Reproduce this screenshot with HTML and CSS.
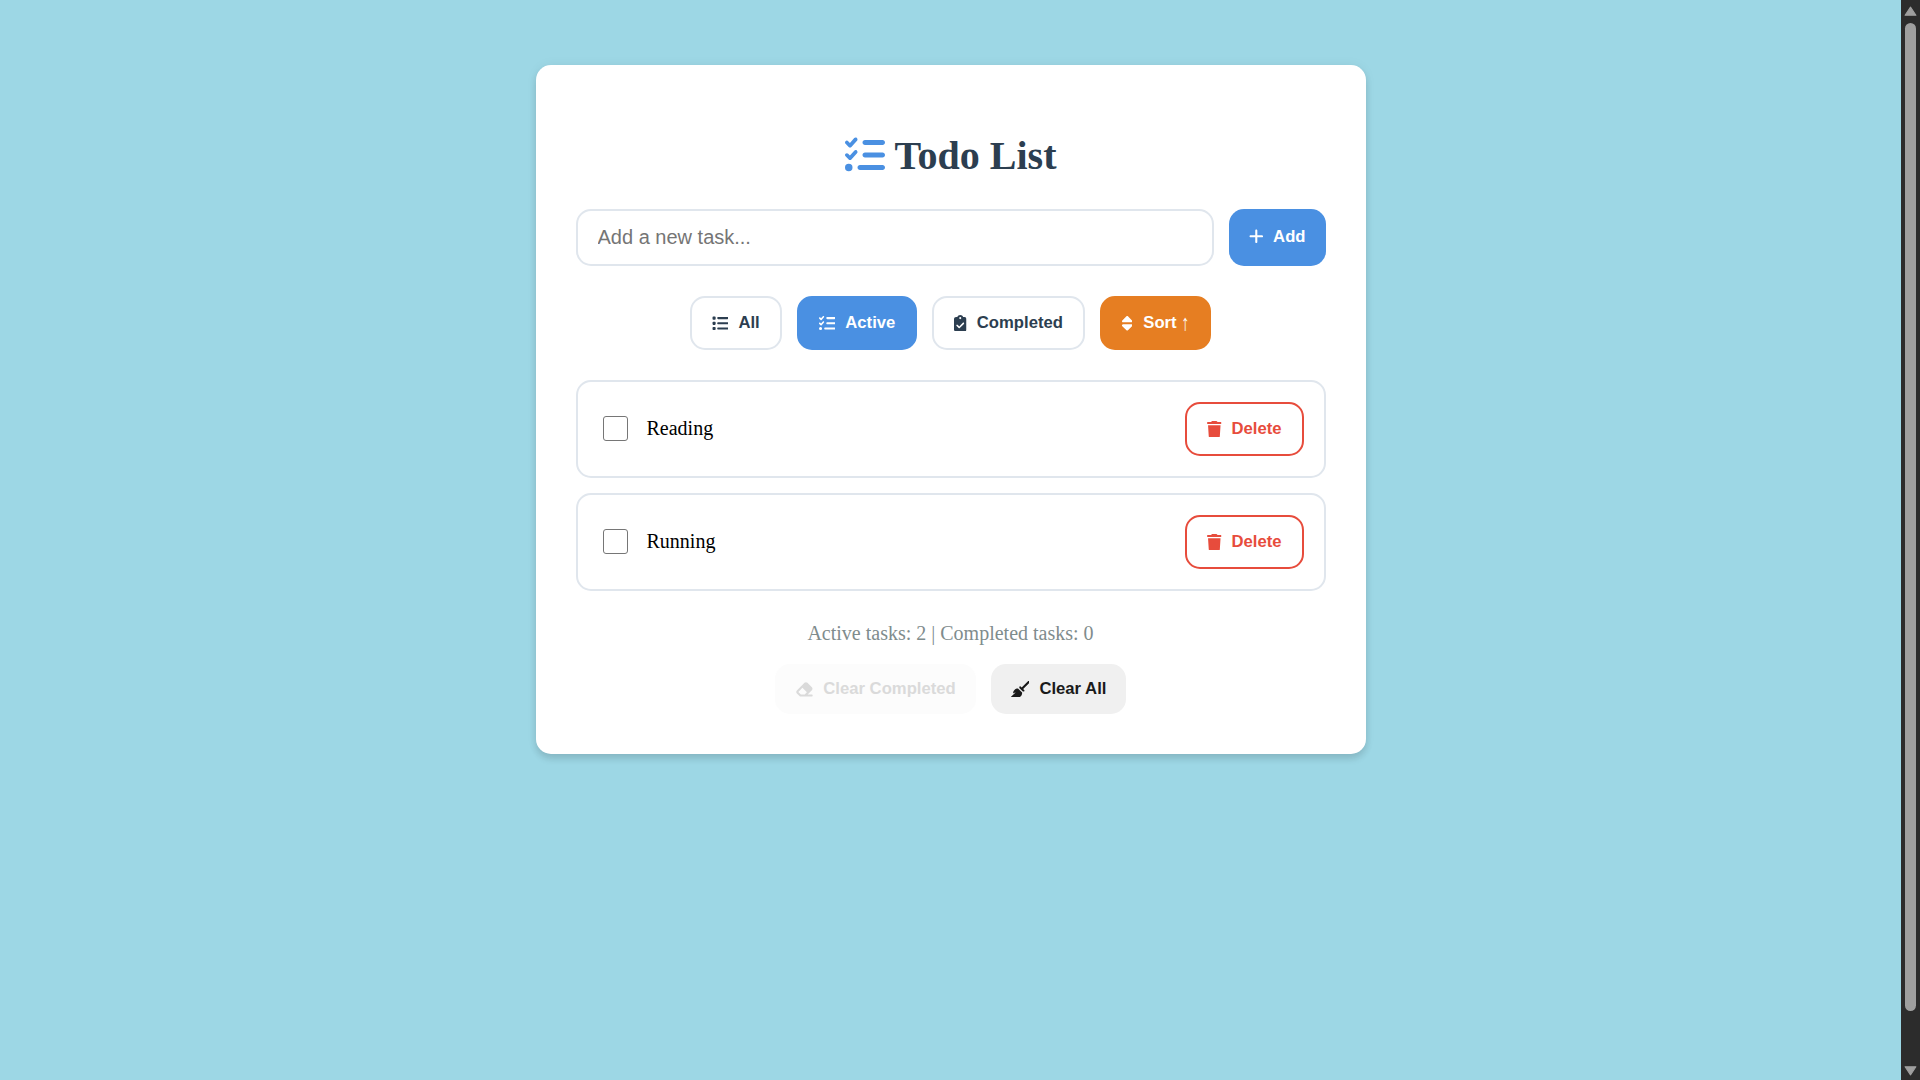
FILE: index.html
```html
<!DOCTYPE html>
<html lang="en">
<head>
<meta charset="utf-8">
<title>Todo List</title>
<link rel="stylesheet" href="styles.css">
</head>
<body>
<svg class="defs" aria-hidden="true">
  <symbol id="list-check" viewBox="0 0 512 512"><path d="M152.100 38.200c9.900 8.900 10.700 24 1.800 33.900l-72 80c-4.400 4.900-10.600 7.800-17.200 7.900s-12.900-2.400-17.600-7L7 113C-2.300 103.600-2.300 88.400 7 79s24.600-9.400 33.900 0l22.100 22.100 55.100-61.200c8.900-9.900 24-10.700 33.900-1.800zm0 160c9.900 8.900 10.700 24 1.800 33.900l-72 80c-4.400 4.900-10.600 7.800-17.200 7.900s-12.900-2.400-17.600-7L7 273c-9.400-9.400-9.400-24.600 0-33.900s24.600-9.400 33.900 0l22.100 22.100 55.100-61.200c8.900-9.900 24-10.700 33.900-1.800zM224 96c0-17.700 14.300-32 32-32l224 0c17.700 0 32 14.300 32 32s-14.300 32-32 32l-224 0c-17.700 0-32-14.300-32-32zm0 160c0-17.700 14.300-32 32-32l224 0c17.700 0 32 14.300 32 32s-14.300 32-32 32l-224 0c-17.700 0-32-14.300-32-32zM160 416c0-17.700 14.300-32 32-32l288 0c17.700 0 32 14.300 32 32s-14.300 32-32 32l-288 0c-17.700 0-32-14.300-32-32zM48 368a48 48 0 1 1 0 96 48 48 0 1 1 0-96z"/></symbol>
  <symbol id="list" viewBox="0 0 512 512"><path d="M40 48C26.700 48 16 58.700 16 72l0 48c0 13.300 10.700 24 24 24l48 0c13.300 0 24-10.700 24-24l0-48c0-13.300-10.700-24-24-24L40 48zM192 64c-17.700 0-32 14.300-32 32s14.300 32 32 32l288 0c17.700 0 32-14.300 32-32s-14.300-32-32-32L192 64zm0 160c-17.700 0-32 14.300-32 32s14.300 32 32 32l288 0c17.700 0 32-14.300 32-32s-14.300-32-32-32l-288 0zm0 160c-17.700 0-32 14.300-32 32s14.300 32 32 32l288 0c17.700 0 32-14.300 32-32s-14.300-32-32-32l-288 0zM16 232l0 48c0 13.300 10.700 24 24 24l48 0c13.300 0 24-10.700 24-24l0-48c0-13.300-10.700-24-24-24l-48 0c-13.300 0-24 10.700-24 24zM40 368c-13.300 0-24 10.700-24 24l0 48c0 13.300 10.700 24 24 24l48 0c13.300 0 24-10.700 24-24l0-48c0-13.300-10.700-24-24-24l-48 0z"/></symbol>
  <symbol id="plus" viewBox="0 0 448 512"><path d="M256 80c0-17.700-14.300-32-32-32s-32 14.300-32 32l0 144L48 224c-17.700 0-32 14.300-32 32s14.300 32 32 32l144 0 0 144c0 17.700 14.300 32 32 32s32-14.300 32-32l0-144 144 0c17.700 0 32-14.300 32-32s-14.300-32-32-32l-144 0 0-144z"/></symbol>
  <symbol id="clipboard" viewBox="0 0 384 512"><path d="M192 0c-41.800 0-77.400 26.700-90.500 64L64 64C28.700 64 0 92.700 0 128L0 448c0 35.300 28.700 64 64 64l256 0c35.300 0 64-28.700 64-64l0-320c0-35.300-28.700-64-64-64l-37.500 0C269.400 26.700 233.800 0 192 0zm0 64a32 32 0 1 1 0 64 32 32 0 1 1 0-64zM305 273L177 401c-9.400 9.400-24.600 9.400-33.900 0L79 337c-9.400-9.400-9.400-24.600 0-33.900s24.600-9.400 33.900 0l47 47L271 239c9.400-9.400 24.600-9.400 33.900 0s9.400 24.600 0 33.900z"/></symbol>
  <symbol id="sort" viewBox="0 0 320 512"><path d="M137.400 41.400c12.500-12.500 32.800-12.500 45.300 0l128 128c9.200 9.200 11.900 22.900 6.900 34.900s-16.600 19.800-29.600 19.800L32 224c-12.900 0-24.600-7.800-29.600-19.800s-2.200-25.700 6.900-34.900l128-128zm0 429.300l-128-128c-9.200-9.200-11.900-22.900-6.900-34.900s16.600-19.800 29.600-19.800l256 0c12.900 0 24.600 7.800 29.600 19.800s2.200 25.700-6.900 34.900l-128 128c-12.500 12.500-32.800 12.500-45.300 0z"/></symbol>
  <symbol id="trash" viewBox="0 0 448 512"><path d="M135.200 17.700L128 32 32 32C14.300 32 0 46.300 0 64S14.300 96 32 96l384 0c17.700 0 32-14.300 32-32s-14.300-32-32-32l-96 0-7.200-14.300C307.400 6.800 296.300 0 284.200 0L163.800 0c-12.100 0-23.200 6.800-28.600 17.700zM416 128L32 128 53.200 467c1.600 25.300 22.600 45 47.900 45l245.800 0c25.300 0 46.300-19.700 47.900-45L416 128z"/></symbol>
  <symbol id="eraser" viewBox="0 0 576 512"><path d="M290.700 57.400L57.400 290.700c-25 25-25 65.500 0 90.500l80 80c12 12 28.300 18.700 45.300 18.700L288 480l9.400 0L512 480c17.700 0 32-14.300 32-32s-14.300-32-32-32l-124.100 0L518.600 285.300c25-25 25-65.500 0-90.500L381.300 57.400c-25-25-65.500-25-90.500 0zM297.400 416l-9.400 0-105.400 0-80-80L227.300 211.300 364.700 348.700 297.400 416z"/></symbol>
  <symbol id="broom" viewBox="0 0 576 512"><path d="M566.600 54.600c12.500-12.500 12.500-32.800 0-45.300s-32.800-12.500-45.300 0l-192 192-34.700-34.700c-4.200-4.200-10-6.600-16-6.600c-12.500 0-22.600 10.100-22.600 22.600l0 29.100L364.300 320l29.100 0c12.500 0 22.600-10.100 22.600-22.600c0-6-2.400-11.800-6.600-16l-34.700-34.700 192-192zM341.100 353.400L222.600 234.900c-42.700-3.700-85.200 11.700-115.800 42.300l-8 8C76.500 307.500 64 337.700 64 369.200c0 6.800 7.100 11.200 13.200 8.200l51.100-25.500c5-2.500 9.500 4.100 5.400 7.900L7.300 473.400C2.700 477.600 0 483.600 0 489.900C0 502.100 9.900 512 22.100 512l173.300 0c38.800 0 75.900-15.400 103.400-42.800c30.600-30.600 45.900-73.100 42.300-115.800z"/></symbol>
</svg>
<div class="window">
  <main class="page">
    <section class="card">
      <h1 class="title"><svg class="icon title-icon"><use href="#list-check"/></svg>Todo List</h1>
      <div class="entry">
        <input class="entry-input" type="text" placeholder="Add a new task...">
        <button class="btn primary"><svg class="icon w14"><use href="#plus"/></svg>Add</button>
      </div>
      <div class="filters">
        <button class="btn outline"><svg class="icon"><use href="#list"/></svg>All</button>
        <button class="btn outline active"><svg class="icon"><use href="#list-check"/></svg>Active</button>
        <button class="btn outline"><svg class="icon w12"><use href="#clipboard"/></svg>Completed</button>
        <button class="btn outline sort"><svg class="icon w10"><use href="#sort"/></svg><span>Sort <span class="direction">↑</span></span></button>
      </div>
      <ul class="tasks">
        <li class="task"><input class="check" type="checkbox"><span class="label">Reading</span><button class="btn outline danger"><svg class="icon w14"><use href="#trash"/></svg>Delete</button></li>
        <li class="task"><input class="check" type="checkbox"><span class="label">Running</span><button class="btn outline danger"><svg class="icon w14"><use href="#trash"/></svg>Delete</button></li>
      </ul>
      <p class="stats">Active tasks: 2 | Completed tasks: 0</p>
      <div class="clear">
        <button class="btn plain faded"><svg class="icon w18"><use href="#eraser"/></svg>Clear Completed</button>
        <button class="btn plain"><svg class="icon w18"><use href="#broom"/></svg>Clear All</button>
      </div>
    </section>
  </main>
  <div class="scrollbar">
    <svg class="arrow" viewBox="0 0 12 10"><path d="M6 1 11 8.500H1Z"/></svg>
    <div class="thumb"></div>
    <svg class="arrow down" viewBox="0 0 12 10"><path d="M6 9 1 1.500H11Z"/></svg>
  </div>
</div>
</body>
</html>
```
FILE: styles.css
```css
* { box-sizing: border-box; }
body { margin: 0; overflow: hidden; font-family: "Liberation Serif", "Times New Roman", serif; }
.defs { display: none; }
.window { display: flex; height: 1080px; }
.page { flex: 1; display: flex; justify-content: center; align-items: flex-start; padding-top: 65px; background: #9dd7e5; }
.card { width: 830px; height: 689px; padding: 40px; background: #fff; border-radius: 15px; box-shadow: 0 5px 7.5px rgba(0, 0, 0, 0.12), 0 0 12px rgba(0, 0, 0, 0.05); }
.title { display: flex; align-items: center; justify-content: center; gap: 10px; height: 46px; margin: 27px 0 31px; font-size: 40px; line-height: 46px; padding-top: 2px; color: #2c3e50; }
.icon { width: 16.67px; height: 16.67px; flex: none; fill: currentColor; }
.title-icon { width: 40px; height: 40px; margin-top: -2px; color: #4a90e2; }
.w10 { width: 10.42px; }
.w12 { width: 12.5px; }
.w14 { width: 14.58px; }
.w18 { width: 18.75px; }
.entry { display: flex; gap: 15px; height: 57px; margin-bottom: 30px; }
.entry-input { flex: 1; min-width: 0; padding: 15px 20px; border: 2px solid #e0e6ed; border-radius: 15px; font: 20px "Liberation Sans", Arial, sans-serif; background: #fff; }
.entry-input::placeholder { color: #757575; }
.btn { display: flex; align-items: center; justify-content: center; gap: 10px; height: 50px; padding: 0 20px; border: 0; border-radius: 15px; font: bold 16.67px/18px "Liberation Sans", Arial, sans-serif; white-space: nowrap; }
.primary { height: 57px; padding-bottom: 2px; background: #4a90e2; color: #fff; }
.outline { height: 54px; border: 2px solid #e0e6ed; background: #fff; color: #2c3e50; }
.active { border-color: #4a90e2; background: #4a90e2; color: #fff; }
.sort { border-color: #e67e22; background: #e67e22; color: #fff; gap: 11px; }
.direction { display: inline-block; font: 16px/14px "Liberation Serif", serif; transform: scaleY(1.4); }
.danger { border-color: #e74c3c; color: #e74c3c; }
.plain { background: #f0f0f0; color: #1a1a1a; }
.faded { background: #fcfcfc; color: #dadada; }
.filters, .clear { display: flex; justify-content: center; gap: 15px; }
.tasks { display: grid; gap: 15px; margin: 30px 0 31px; padding: 0; list-style: none; }
.task { display: flex; align-items: center; height: 98px; padding: 20px; border: 2px solid #e0e6ed; border-radius: 15px; }
.check { appearance: none; width: 25px; height: 25px; margin: 0 18.5px 1px 5.5px; border: 1px solid #767676; border-radius: 3px; background: #fff; }
.label { flex: 1; font-size: 20px; line-height: 23px; padding-bottom: 1px; }
.stats { margin: 0 0 19px; font-size: 20px; line-height: 23px; text-align: center; color: #7f8c8d; }
.scrollbar { display: flex; flex-direction: column; align-items: center; width: 19px; padding: 6px 0 4px; background: #2c2c2c; }
.arrow { width: 13px; height: 11px; fill: #9f9f9f; stroke: #9f9f9f; stroke-linejoin: round; }
.thumb { width: 11px; height: 988px; margin-top: 6px; border-radius: 6px; background: #9f9f9f; }
.down { margin-top: auto; }
```
